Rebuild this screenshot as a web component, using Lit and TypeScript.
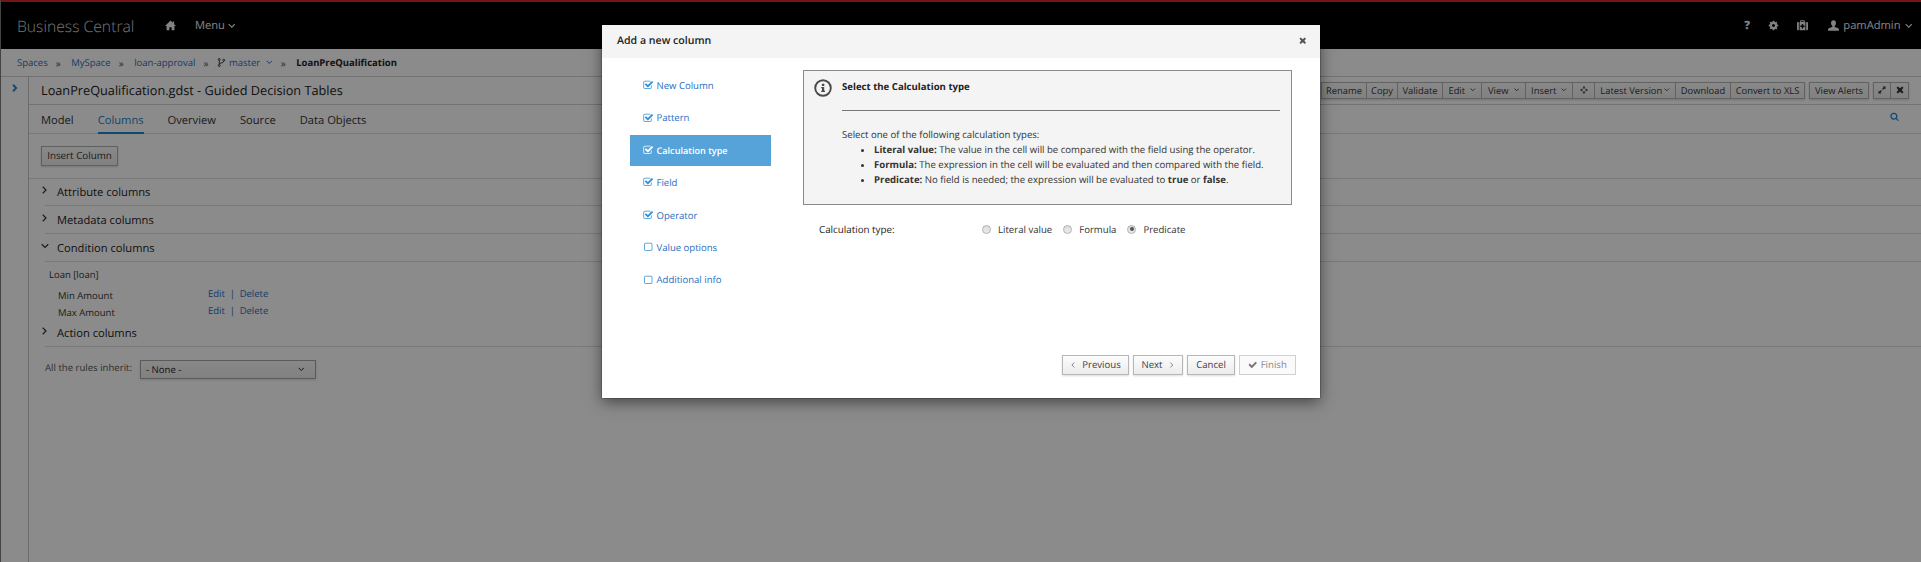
import { LitElement, html, css, svg } from 'lit';
import { customElement, property, state } from 'lit/decorators.js';
import { classMap } from 'lit/directives/class-map.js';

const big = (d: string) => svg`<svg viewBox="0 0 1792 1792"><path fill="currentColor" d=${d}/></svg>`;
const line = (d: string, w = 2) =>
  svg`<svg viewBox="0 0 16 16"><path d=${d} fill="none" stroke="currentColor" stroke-width=${w}/></svg>`;
const solid = (d: string) =>
  svg`<svg viewBox="0 0 16 16"><path d=${d} fill="currentColor" fill-rule="evenodd"/></svg>`;

const glyphs: Record<string, unknown> = {
  down: line('M1.5 4.5L8 11l6.5-6.5', 2.4),
  right: line('M3.5 1.5L10 8l-6.500 6.500', 2.4),
  left: line('M11.500 1.500L5 8l6.500 6.500', 2.4),
  boldRight: line('M4 1.500L10.500 8L4 14.500', 3.6),
  home: solid('M8 0.800L0 8.600H2.300V15H6.400V10.500H9.600V15H13.700V8.600H16L13.300 6V2H11.300V4Z'),
  user: solid('M8 0.500C5.700 0.500 4.400 2 4.400 4.300C4.400 6 5 7.600 6.300 8.600V10.300L1.800 11.600C0.600 12 0 12.800 0 15.500H16C16 12.800 15.400 12 14.200 11.600L9.700 10.300V8.600C11 7.600 11.600 6 11.600 4.300C11.600 2 10.300 0.500 8 0.500Z'),
  medkit: solid('M4.600 3V1.600Q4.600 0.500 5.700 0.500H10.300Q11.400 0.500 11.400 1.600V3H12.200V15H3.800V3ZM6 3H10V1.900H6ZM2.600 3V15H1.500Q0 15 0 13.500V4.500Q0 3 1.500 3ZM13.400 3H14.500Q16 3 16 4.500V13.500Q16 15 14.500 15H13.400ZM7 5.800V8H4.900V10H7V12.200H9V10H11.100V8H9V5.800Z'),
  branch: svg`<svg viewBox="0 0 16 16"><g fill="none" stroke="currentColor" stroke-width="1.700"><circle cx="4" cy="2.600" r="1.700"/><circle cx="4" cy="13.400" r="1.700"/><circle cx="12" cy="4" r="1.700"/><path d="M4 4.300V11.700M12 5.700C12 9.500 4.500 8 4 11"/></g></svg>`,
  times: solid('M1 3.700L3.700 1L8 4.600L12.300 1L15 3.700L11.400 8L15 12.300L12.300 15L8 11.400L3.700 15L1 12.300L4.600 8Z'),
  expand: solid('M9 1H15V7L12.900 4.900L10 7.800L8.200 6L11.100 3.100ZM7 15H1V9L3.100 11.100L6 8.200L7.800 10L4.900 12.900Z'),
  target: svg`<svg viewBox="0 0 16 16"><path d="M8 3.200L12.800 8L8 12.800L3.200 8Z" fill="none" stroke="currentColor" stroke-width="1.400"/><path d="M8 0L10.600 3.600H5.400ZM8 16L5.400 12.400H10.600ZM0 8L3.600 5.400V10.600ZM16 8L12.400 10.600V5.400Z" fill="currentColor"/></svg>`,
  info: svg`<svg viewBox="0 0 18 18"><circle cx="9" cy="9" r="7.800" fill="none" stroke="currentColor" stroke-width="1.900"/><path d="M7.900 4.800H10.300V6.900H7.900ZM7.200 7.900H10.200V11.700H11V13H7.200V11.700H8V9.200H7.200Z" fill="currentColor"/></svg>`,
  cog: big('M1152 896q0-106-75-181t-181-75-181 75-75 181 75 181 181 75 181-75 75-181zm512-109v222q0 12-8 23t-20 13l-185 28q-19 54-39 91 35 50 107 138 10 12 10 25t-9 23q-27 37-99 108t-94 71q-12 0-26-9l-138-108q-44 23-91 38-16 136-29 186-7 28-36 28h-222q-14 0-24.5-8.5t-11.5-21.5l-28-184q-49-16-90-37l-141 107q-10 9-25 9-14 0-25-11-126-114-165-168-7-10-7-23 0-12 8-23 15-21 51-66.5t54-70.5q-27-50-41-99l-183-27q-13-2-21-12.5t-8-23.5v-222q0-12 8-23t19-13l186-28q14-46 39-92-40-57-107-138-10-12-10-24 0-10 9-23 26-36 98.5-107.5t94.5-71.5q13 0 26 10l138 107q44-23 91-38 16-136 29-186 7-28 36-28h222q14 0 24.5 8.500t11.500 21.500l28 184q49 16 90 37l142-107q9-9 24-9 13 0 25 10 129 119 165 170 7 8 7 22 0 12-8 23-15 21-51 66.500t-54 70.500q26 50 41 98l183 28q13 2 21 12.500t8 23.500z'),
  checked: big('M1472 930v318q0 119-84.5 203.5t-203.5 84.5h-832q-119 0-203.5-84.5t-84.5-203.5v-832q0-119 84.5-203.5t203.5-84.5h832q63 0 117 25 15 7 18 23 3 17-9 29l-49 49q-10 10-23 10-3 0-9-2-23-6-45-6h-832q-66 0-113 47t-47 113v832q0 66 47 113t113 47h832q66 0 113-47t47-113v-254q0-13 9-22l64-64q10-10 23-10 6 0 12 3 20 8 20 29zm231-489l-814 814q-24 24-57 24t-57-24l-430-430q-24-24-24-57t24-57l110-110q24-24 57-24t57 24l263 263 647-647q24-24 57-24t57 24l110 110q24 24 24 57t-24 57z'),
  unchecked: big('M1312 256h-832q-66 0-113 47t-47 113v832q0 66 47 113t113 47h832q66 0 113-47t47-113v-832q0-66-47-113t-113-47zm288 160v832q0 119-84.5 203.5t-203.5 84.5h-832q-119 0-203.5-84.5t-84.5-203.5v-832q0-119 84.5-203.5t203.5-84.5h832q119 0 203.5 84.5t84.5 203.5z'),
  search: big('M1216 832q0-185-131.5-316.5t-316.5-131.5-316.5 131.5-131.5 316.5 131.5 316.5 316.5 131.5 316.5-131.5 131.5-316.5zm512 832q0 52-38 90t-90 38q-54 0-90-38l-343-342q-179 124-399 124-143 0-273.5-55.5t-225-150-150-225-55.5-273.5 55.5-273.5 150-225 225-150 273.5-55.5 273.5 55.5 225 150 150 225 55.5 273.5q0 220-124 399l343 343q37 37 37 90z'),
  check: big('M1671 566q0 40-28 68l-724 724-136 136q-28 28-68 28t-68-28l-136-136-362-362q-28-28-28-68t28-68l136-136q28-28 68-28t68 28l294 295 656-657q28-28 68-28t68 28l136 136q28 28 28 68z'),
};

@customElement('ui-icon')
class UiIcon extends LitElement {
  @property() name = '';
  @property({ type: Number }) size = 10;
  static styles = css`
    :host { display: inline-flex; flex: none; }
    .box { display: flex; }
    .box svg { width: 100%; height: 100%; display: block; }
  `;
  render() {
    return html`<span class="box" style="width:${this.size}px;height:${this.size}px">${glyphs[this.name]}</span>`;
  }
}

const icon = (name: string, size = 10) => html`<ui-icon name=${name} size=${size}></ui-icon>`;

@customElement('app-header')
class AppHeader extends LitElement {
  static styles = css`
    :host { display: block; }
    .bar { display: flex; align-items: center; height: 47px; border-top: 2px solid #d92a1e; background: #000; color: #f0f0f0; padding: 0 9px 0 16px; font-size: 11.15px; }
    .brand { width: 148px; font-size: 15.7px; font-weight: 300; color: #d8d8d8; white-space: nowrap; }
    .menu { display: flex; align-items: center; gap: 3px; margin-left: 19px; }
    .right { display: flex; align-items: center; margin-left: auto; }
    .help { font-size: 11.5px; font-weight: 800; width: 24px; }
    .gear { width: 29px; }
    .kit { width: 31px; }
    .user { display: flex; align-items: center; gap: 4px; }
    .gear, .kit { display: flex; }
  `;
  render() {
    return html`<div class="bar">
      <span class="brand">Business Central</span>${icon('home', 11)}
      <span class="menu">Menu ${icon('down', 7.5)}</span>
      <div class="right">
        <span class="help">?</span><span class="gear">${icon('cog', 11)}</span><span class="kit">${icon('medkit', 11)}</span>
        <span class="user">${icon('user', 11)}<span>pamAdmin</span>${icon('down', 7.5)}</span>
      </div>
    </div>`;
  }
}

@customElement('app-breadcrumb')
class AppBreadcrumb extends LitElement {
  static styles = css`
    :host { display: block; }
    .trail { display: flex; align-items: center; height: 27px; border-bottom: 1px solid #d1d1d1; padding-left: 16px; font-size: 9.5px; color: #2a6dbf; }
    .sep { color: #555; margin: 0 10px 0 8px; font-size: 10px; width: 5.500px; }
    .branch { display: flex; align-items: center; }
    .fork { color: #333; display: flex; margin-right: 3px; margin-left: -2px; }
    .caret { display: flex; margin-left: 6px; }
    .here { font-weight: 700; color: #222; }
  `;
  render() {
    const sep = html`<span class="sep">»</span>`;
    return html`<nav class="trail">
      <span>Spaces</span>${sep}<span>MySpace</span>${sep}<span>loan-approval</span>${sep}
      <span class="branch"><span class="fork">${icon('branch', 9)}</span>master<span class="caret">${icon('down', 6.5)}</span></span>${sep}
      <span class="here">LoanPreQualification</span>
    </nav>`;
  }
}

interface Tool { label?: string; glyph?: string; caret?: boolean; width: number; }

@customElement('editor-toolbar')
class EditorToolbar extends LitElement {
  groups: Tool[][] = [
    [
      { label: 'Rename', width: 46 }, { label: 'Copy', width: 31 }, { label: 'Validate', width: 45 },
      { label: 'Edit', caret: true, width: 39 }, { label: 'View', caret: true, width: 44 },
      { label: 'Insert', caret: true, width: 47 }, { glyph: 'target', width: 22 },
      { label: 'Latest Version', caret: true, width: 81 }, { label: 'Download', width: 55 },
      { label: 'Convert to XLS', width: 74 },
    ],
    [{ label: 'View Alerts', width: 60 }],
    [{ glyph: 'expand', width: 18 }, { glyph: 'times', width: 18 }],
  ];
  static styles = css`
    :host { display: block; }
    .bar { display: flex; gap: 4px; }
    .group { display: flex; box-shadow: 0 1px 2px rgba(0, 0, 0, .18); }
    .tool { box-sizing: border-box; height: 17px; padding-bottom: 1px; border: 1px solid #b4b4b4; border-left-width: 0; background: linear-gradient(#fafafa, #ededed); font-size: 9.4px; color: #363636; display: flex; align-items: center; justify-content: center; gap: 5px; white-space: nowrap; }
    .tool:first-child { border-left-width: 1px; }
    .tight { gap: 2px; }
  `;
  render() {
    return html`<div class="bar">${this.groups.map((g) => html`<div class="group">${g.map((t) => html`
      <div class="tool ${t.width > 80 ? 'tight' : ''}" style="width:${t.width}px">${t.label ? html`<span>${t.label}</span>` : ''}${t.glyph ? icon(t.glyph, 8) : ''}${t.caret ? icon('down', 5.5) : ''}</div>`)}</div>`)}</div>`;
  }
}

@customElement('columns-editor')
class ColumnsEditor extends LitElement {
  static styles = css`
    :host { display: block; }
    .layout { display: grid; grid-template-columns: 28px 1fr; height: 485px; }
    .rail { display: flex; align-items: flex-start; box-sizing: border-box; border-right: 1px solid #c6c6c6; color: #1f86d0; padding: 7px 0 0 10px; }
    .title { display: flex; align-items: center; justify-content: space-between; height: 27px; border-bottom: 1px solid #d1d1d1; padding: 0 12px; font-size: 12.72px; color: #222; }
    .name-line { padding-bottom: 1px; }
    .tabs { display: flex; gap: 24px; height: 28px; border-bottom: 1px solid #dcdcdc; padding: 0 22px 0 12px; font-size: 11.17px; color: #333; }
    .tab { line-height: 31px; height: 27px; border-bottom: 2px solid transparent; }
    .active { color: #1d7fc9; border-bottom-color: #1d86d0; }
    .find { display: flex; margin: 7px 0 0 auto; color: #1d86d0; }
    .actions { height: 45px; box-sizing: border-box; padding: 12px 12px 0; border-bottom: 1px solid #dcdcdc; }
    .btn { display: flex; box-sizing: border-box; align-items: center; justify-content: center; width: 77px; height: 20px; padding-bottom: 1px; border: 1px solid #b0b0b0; background: linear-gradient(#fafafa, #ececec); box-shadow: 0 1px 2px rgba(0, 0, 0, .15); font-size: 9.8px; color: #333; }
    .section { display: flex; align-items: center; height: 27px; box-sizing: border-box; border-bottom: 1px solid #dedede; margin-left: 16px; font-size: 11.17px; color: #222; }
    .tall { height: 28px; }
    .text { padding-top: 1px; }
    .mark { width: 16px; margin-left: -4px; display: flex; padding-bottom: 4px; color: #333; }
    .body { font-size: 9.5px; color: #333; height: 58px; }
    .fact { padding: 7px 0 0 20px; line-height: 12px; height: 15px; }
    .row { display: grid; grid-template-columns: 150px 1fr; padding-left: 29px; height: 17px; line-height: 12px; }
    .name { padding-top: 6px; }
    .ops { padding-top: 4px; color: #2a6dbf; white-space: pre; word-spacing: 2.300px; }
    .inherit { display: flex; margin-left: 16px; padding-top: 13px; font-size: 9.58px; color: #555; }
    .label { width: 95px; line-height: 16px; }
    .select { display: flex; box-sizing: border-box; align-items: center; justify-content: space-between; width: 176px; height: 19px; border: 1px solid #a8a8a8; padding: 0 11px 0 5px; background: linear-gradient(#fafafa, #ececec); box-shadow: 0 1px 2px rgba(0, 0, 0, .15); color: #222; font-weight: 500; }
  `;
  private section(label: string, open = false, tall = true) {
    return html`<div class=${classMap({ section: true, tall })}><span class="mark">${icon(open ? 'down' : 'right', 8)}</span><span class="text">${label}</span></div>`;
  }
  render() {
    const tabs = ['Model', 'Columns', 'Overview', 'Source', 'Data Objects'];
    return html`<div class="layout">
      <div class="rail">${icon('boldRight', 8)}</div>
      <main>
        <div class="title"><span class="name-line">LoanPreQualification.gdst - Guided Decision Tables</span><editor-toolbar></editor-toolbar></div>
        <div class="tabs">${tabs.map((t) => html`<span class=${classMap({ tab: true, active: t === 'Columns' })}>${t}</span>`)}<span class="find">${icon('search', 9)}</span></div>
        <div class="actions"><span class="btn">Insert Column</span></div>
        ${this.section('Attribute columns', false, false)}
        ${this.section('Metadata columns')}
        ${this.section('Condition columns', true)}
        <div class="body">
          <div class="fact">Loan [loan]</div>
          ${['Min Amount', 'Max Amount'].map((n) => html`<div class="row"><span class="name">${n}</span><span class="ops">Edit | Delete</span></div>`)}
        </div>
        ${this.section('Action columns', false, false)}
        <div class="inherit"><span class="label">All the rules inherit:</span><span class="select">- None - ${icon('down', 6.5)}</span></div>
      </main>
    </div>`;
  }
}

@customElement('column-wizard')
class ColumnWizard extends LitElement {
  @state() private picked = 'Predicate';
  steps: [string, boolean][] = [
    ['New Column', true], ['Pattern', true], ['Calculation type', true], ['Field', true],
    ['Operator', true], ['Value options', false], ['Additional info', false],
  ];
  static styles = css`
    :host { display: block; }
    .dialog { box-sizing: border-box; width: 718px; height: 373px; background: #fff; box-shadow: 0 4px 14px rgba(0, 0, 0, .5), 0 0 1px #000; color: #333; font-size: 9.6px; display: grid; grid-template-rows: 33px 1fr auto; }
    .head { display: flex; align-items: center; justify-content: space-between; background: #f4f4f4; padding: 0 14px 1px 15px; font-size: 10.6px; font-weight: 600; color: #222; }
    .head ui-icon { color: #555; }
    .content { display: grid; grid-template-columns: 141px 1fr; column-gap: 32px; padding: 12px 28px 0; }
    .steps { display: flex; flex-direction: column; gap: 1.400px; }
    .step { display: flex; align-items: center; gap: 3px; height: 31px; padding-left: 13px; color: #2a6dbf; font-size: 9.55px; }
    .step ui-icon { color: #2f8fd4; }
    .current { background: #56a3d9; color: #fff; font-weight: 600; font-size: 9.15px; }
    .current ui-icon { color: #fff; }
    .info { box-sizing: border-box; display: grid; grid-template-columns: 28px 1fr; width: 489px; height: 135px; border: 1px solid #8b8b8b; background: #f4f4f4; padding: 8px 11px 0 10px; }
    .info ui-icon { color: #4a4a4a; }
    .heading { font-weight: 700; line-height: 16px; padding-bottom: 15px; border-bottom: 1px solid #777; color: #222; }
    .lead { margin-top: 16px; line-height: 15px; }
    .list { margin: 0; padding-left: 32px; line-height: 15px; }
    .field { display: flex; align-items: center; margin: 17px 0 0 16px; height: 14px; }
    .caption { width: 163px; font-weight: 500; color: #222; font-size: 9.8px; }
    .option { display: flex; align-items: center; gap: 7px; margin-right: 11px; }
    .dot { box-sizing: border-box; width: 9px; height: 9px; border-radius: 50%; border: 1px solid #b0b0b0; background: linear-gradient(#ddd, #ececec); display: flex; align-items: center; justify-content: center; }
    .on::after { content: ''; width: 4px; height: 4px; border-radius: 50%; background: #555; }
    .foot { display: flex; justify-content: flex-end; gap: 4px; padding: 0 24px 23px 0; }
    .btn { box-sizing: border-box; height: 20px; padding-bottom: 1px; border: 1px solid #b7b7b7; background: linear-gradient(#fcfcfc, #ececec); box-shadow: 0 1px 2px rgba(0, 0, 0, .14); display: flex; align-items: center; justify-content: center; gap: 6px; font-size: 9.6px; font-weight: 500; color: #3c3c4a; }
    .btn ui-icon { color: #777; }
    .prev { width: 67px; } .next { width: 50px; } .cancel { width: 48px; }
    .finish { width: 57px; gap: 3px; color: #888; font-weight: 400; border-color: #d0d0d0; background: #fafafa; box-shadow: none; }
  `;
  render() {
    return html`<section class="dialog">
      <header class="head"><span>Add a new column</span>${icon('times', 7.5)}</header>
      <div class="content">
        <nav class="steps">${this.steps.map(([s, done]) => html`<div class=${classMap({ step: true, current: s === 'Calculation type' })}>${icon(done ? 'checked' : 'unchecked', 10.5)}<span>${s}</span></div>`)}</nav>
        <div>
          <div class="info">
            ${icon('info', 18)}
            <div>
              <div class="heading">Select the Calculation type</div>
              <div class="lead">Select one of the following calculation types:</div>
              <ul class="list">
                <li><b>Literal value:</b> The value in the cell will be compared with the field using the operator.</li>
                <li><b>Formula:</b> The expression in the cell will be evaluated and then compared with the field.</li>
                <li><b>Predicate:</b> No field is needed; the expression will be evaluated to <b>true</b> or <b>false</b>.</li>
              </ul>
            </div>
          </div>
          <div class="field"><span class="caption">Calculation type:</span>
            ${['Literal value', 'Formula', 'Predicate'].map((o) => html`<span class="option" @click=${() => { this.picked = o; }}><span class=${classMap({ dot: true, on: this.picked === o })}></span>${o}</span>`)}
          </div>
        </div>
      </div>
      <footer class="foot">
        <span class="btn prev">${icon('left', 6)}Previous</span><span class="btn next">Next${icon('right', 6)}</span>
        <span class="btn cancel">Cancel</span><span class="btn finish">${icon('check', 9.5)}Finish</span>
      </footer>
    </section>`;
  }
}

@customElement('app-root')
class AppRoot extends LitElement {
  static styles = css`
    :host { display: block; font-family: "Open Sans", "Noto Sans", sans-serif; text-rendering: geometricPrecision; }
    .screen { position: relative; box-sizing: border-box; height: 562px; overflow: hidden; background: #fff; border-left: 1px solid #444; }
    .backdrop { position: absolute; inset: 0; background: rgba(0, 0, 0, .455); padding: 25px 0 0 601px; }
  `;
  render() {
    return html`<div class="screen">
      <app-header></app-header><app-breadcrumb></app-breadcrumb><columns-editor></columns-editor>
      <div class="backdrop"><column-wizard></column-wizard></div>
    </div>`;
  }
}
